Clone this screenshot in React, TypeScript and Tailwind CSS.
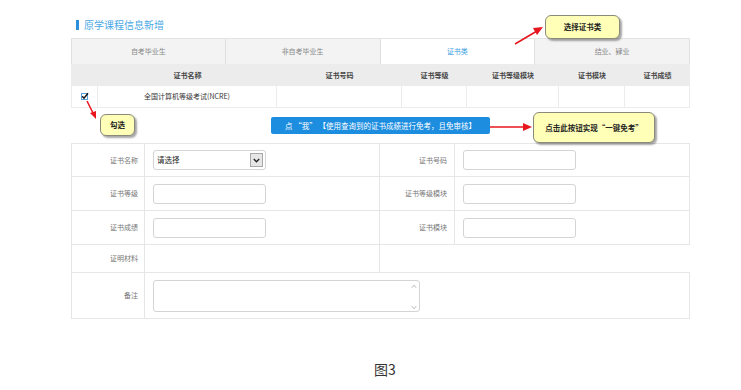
import React from "react";

const font = "font-['Noto_Sans_CJK_SC','Noto_Sans',sans-serif]";

function Callout({ className, children }: { className: string; children: React.ReactNode }) {
  return (
    <div
      className={`absolute flex items-center justify-center rounded-[6px] border border-[#8a8a7a] bg-[#ffffb8] text-[7.5px] font-bold text-[#222] shadow-[2px_2px_2px_rgba(0,0,0,0.35)] ${className}`}
    >
      {children}
    </div>
  );
}

function Input() {
  return <div className="h-[20px] w-[113px] rounded-[3px] border border-[#d4d4d4] bg-white" />;
}

export default function App() {
  const headers = ["", "证书名称", "证书号码", "证书等级", "证书等级模块", "证书模块", "证书成绩"];
  const tabs = ["自考毕业生", "非自考毕业生", "证书类", "结业、肄业"];
  return (
    <div className={`relative h-[390px] w-[741px] overflow-hidden bg-white ${font}`}>
      <div className="w-[690px] pl-[71px] pt-[18px]">
        {/* title */}
        <div className="flex h-[14px] items-center pl-[5px]">
          <div className="h-[10px] w-[3px] bg-[#2b8fdc]" />
          <div className="ml-[5px] text-[10px] leading-[14px] text-[#4aa8e4]">原学课程信息新增</div>
        </div>
        {/* tabs */}
        <div className="mt-[6px] grid h-[26px] grid-cols-4 border-t border-[#e3e3e3]">
          {tabs.map((t, i) => (
            <div
              key={t}
              className={`flex items-center justify-center border-r border-[#e0e0e0] text-[7px] ${
                i === 2 ? "bg-white text-[#3a9ee2]" : "bg-[#f3f3f3] text-[#888]"
              } ${i === 0 ? "border-l" : ""}`}
            >
              {t}
            </div>
          ))}
        </div>
        {/* list table */}
        <div className="grid h-[22px] grid-cols-[27px_179px_125px_65px_92px_66px_65px] bg-[#ececec]">
          {headers.map((h, i) => (
            <div key={i} className="flex items-center justify-center text-[7px] font-bold text-[#444]">
              {h}
            </div>
          ))}
        </div>
        <div className="grid h-[22px] grid-cols-[27px_179px_125px_65px_92px_66px_65px] border-b border-[#ececec] bg-white">
          <div className="flex items-center justify-center border-l border-r border-[#ececec]">
            <div className="relative h-[7px] w-[7px] border border-[#5aa0d8] bg-white">
              <svg className="absolute left-[-1px] top-[-2px]" width="8" height="8" viewBox="0 0 8 8">
                <path d="M1.2 4.2 L3 6.2 L7 1.2" fill="none" stroke="#111" strokeWidth="1.4" />
              </svg>
            </div>
          </div>
          <div className="flex items-center justify-center border-r border-[#ececec] text-[7px] text-[#333]">
            全国计算机等级考试(NCRE)
          </div>
          <div className="border-r border-[#ececec]" />
          <div className="border-r border-[#ececec]" />
          <div className="border-r border-[#ececec]" />
          <div className="border-r border-[#ececec]" />
          <div className="border-r border-[#ececec]" />
        </div>
        {/* action row */}
        <div className="h-[35px] pl-[200px] pt-[9px]">
          <div className="flex h-[17px] w-[219px] items-center justify-center rounded-[2px] bg-[#1d8ddf] text-[7.5px] text-white">
            点 “我” 【使用查询到的证书成绩进行免考，且免审核】
          </div>
        </div>
        {/* form */}
        <div className="grid grid-cols-[74px_235px_75px_235px] text-[7px] text-[#777]">
          {/* row 1 */}
          <div className="flex h-[34px] items-center justify-end border-l border-r border-t border-b border-[#e6e6e6] pr-[6px]">证书名称</div>
          <div className="flex items-center border-r border-t border-b border-[#e6e6e6] pl-[8px]">
            <div className="relative flex h-[20px] w-[113px] items-center rounded-[3px] border border-[#d4d4d4] bg-white pl-[3px] text-[7.5px] text-[#222]">
              请选择
              <div className="absolute right-[2px] top-[2px] flex h-[14px] w-[13px] items-center justify-center border border-[#a8a8a8] bg-[#e6e6e6]">
                <svg width="7" height="5" viewBox="0 0 7 5">
                  <path d="M0.8 1 L3.5 3.8 L6.2 1" fill="none" stroke="#222" strokeWidth="1.3" />
                </svg>
              </div>
            </div>
          </div>
          <div className="flex items-center justify-end border-r border-t border-b border-[#e6e6e6] pr-[7px]">证书号码</div>
          <div className="flex items-center border-r border-t border-b border-[#e6e6e6] pl-[8px]"><Input /></div>
          {/* row 2 */}
          <div className="flex h-[34px] items-center justify-end border-l border-r border-b border-[#e6e6e6] pr-[6px]">证书等级</div>
          <div className="flex items-center border-r border-b border-[#e6e6e6] pl-[8px]"><Input /></div>
          <div className="flex items-center justify-end border-r border-b border-[#e6e6e6] pr-[7px]">证书等级模块</div>
          <div className="flex items-center border-r border-b border-[#e6e6e6] pl-[8px]"><Input /></div>
          {/* row 3 */}
          <div className="flex h-[34px] items-center justify-end border-l border-r border-b border-[#e6e6e6] pr-[6px]">证书成绩</div>
          <div className="flex items-center border-r border-b border-[#e6e6e6] pl-[8px]"><Input /></div>
          <div className="flex items-center justify-end border-r border-b border-[#e6e6e6] pr-[7px]">证书模块</div>
          <div className="flex items-center border-r border-b border-[#e6e6e6] pl-[8px]"><Input /></div>
          {/* row 4 */}
          <div className="flex h-[28px] items-center justify-end border-l border-r border-b border-[#e6e6e6] pr-[6px]">证明材料</div>
          <div className="border-r border-b border-[#e6e6e6]" />
          <div className="col-span-2 border-b border-[#e6e6e6]" />
          {/* row 5 */}
          <div className="flex h-[46px] items-center justify-end border-l border-r border-b border-[#e6e6e6] pr-[6px]">备注</div>
          <div className="col-span-3 border-r border-b border-[#e6e6e6] pl-[8px] pt-[7px]">
            <div className="relative h-[32px] w-[267px] rounded-[3px] border border-[#d4d4d4] bg-white">
              <div className="absolute right-[1px] top-[3px] flex h-[26px] w-[8px] flex-col items-center justify-between">
                <svg width="6" height="5" viewBox="0 0 6 5">
                  <path d="M0.8 3.8 L3 1.2 L5.2 3.8" fill="none" stroke="#b8b8b8" strokeWidth="1" />
                </svg>
                <svg width="6" height="5" viewBox="0 0 6 5">
                  <path d="M0.8 1.2 L3 3.8 L5.2 1.2" fill="none" stroke="#b8b8b8" strokeWidth="1" />
                </svg>
              </div>
            </div>
          </div>
        </div>
      </div>
      {/* caption */}
      <div className="mt-[40px] w-[741px] pl-[29px] text-center text-[14px] leading-[20px] text-[#333]">图3</div>

      {/* callouts */}
      <Callout className="left-[545px] top-[15px] h-[24px] w-[75px]">选择证书类</Callout>
      <Callout className="left-[100px] top-[114px] h-[22px] w-[35px]">勾选</Callout>
      <Callout className="left-[533px] top-[112px] h-[31px] w-[122px]">点击此按钮实现“一键免考”</Callout>

      {/* arrows */}
      <svg className="pointer-events-none absolute left-0 top-0" width="741" height="390" viewBox="0 0 741 390">
        <g stroke="#e8161e" strokeWidth="1.5" fill="#e8161e">
          <line x1="515" y1="44" x2="537" y2="31" />
          <polygon points="543,27 533,28 537,35" stroke="none" />
          <line x1="87" y1="101" x2="93" y2="113" />
          <polygon points="96,119 90,113 96,111" stroke="none" />
          <line x1="490" y1="127" x2="524" y2="127" />
          <polygon points="532,127 523,123 523,131" stroke="none" />
        </g>
      </svg>
    </div>
  );
}
